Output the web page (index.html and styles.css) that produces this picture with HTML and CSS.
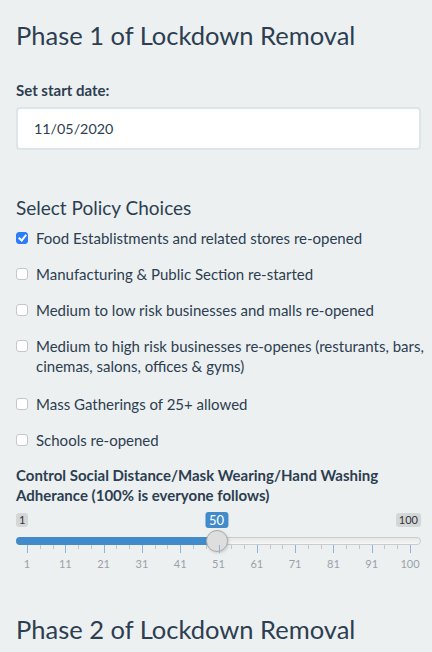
FILE: index.html
```html
<!DOCTYPE html>
<html>
<head>
<meta charset="utf-8">
<link rel="stylesheet" href="styles.css">
</head>
<body>
<div class="panel">
  <h3 class="phase">Phase 1 of Lockdown Removal</h3>

  <label class="ctl-label" for="start">Set start date:</label>
  <input id="start" class="date-input" type="text" value="11/05/2020">

  <h4 class="section">Select Policy Choices</h4>
  <div class="checks">
    <label class="check"><input type="checkbox" checked><span>Food Establistments and related stores re-opened</span></label>
    <label class="check"><input type="checkbox"><span>Manufacturing &amp; Public Section re-started</span></label>
    <label class="check"><input type="checkbox"><span>Medium to low risk businesses and malls re-opened</span></label>
    <label class="check check-multi"><input type="checkbox"><span>Medium to high risk businesses re-openes (resturants, bars, cinemas, salons, offices &amp; gyms)</span></label>
    <label class="check"><input type="checkbox"><span>Mass Gatherings of 25+ allowed</span></label>
    <label class="check"><input type="checkbox"><span>Schools re-opened</span></label>
  </div>

  <div class="ctl-label slider-label">Control Social Distance/Mask Wearing/Hand Washing Adherance (100% is everyone follows)</div>
  <div class="irs">
    <div class="irs-top">
      <span class="irs-min">1</span>
      <div class="irs-rail">
        <span class="irs-single" style="left:49.49%">50</span>
      </div>
      <span class="irs-max">100</span>
    </div>
    <div class="irs-line">
      <div class="irs-rail">
        <div class="irs-bar" style="width:calc(49.49% + 11px)"></div>
        <div class="irs-handle" style="left:49.49%"></div>
      </div>
    </div>
    <div class="irs-grid">
      <span class="pol big" style="left:0%"></span>
      <span class="pol" style="left:3.333%"></span>
      <span class="pol" style="left:6.667%"></span>
      <span class="pol big" style="left:10%"></span>
      <span class="pol" style="left:13.333%"></span>
      <span class="pol" style="left:16.667%"></span>
      <span class="pol big" style="left:20%"></span>
      <span class="pol" style="left:23.333%"></span>
      <span class="pol" style="left:26.667%"></span>
      <span class="pol big" style="left:30%"></span>
      <span class="pol" style="left:33.333%"></span>
      <span class="pol" style="left:36.667%"></span>
      <span class="pol big" style="left:40%"></span>
      <span class="pol" style="left:43.333%"></span>
      <span class="pol" style="left:46.667%"></span>
      <span class="pol big" style="left:50%"></span>
      <span class="pol" style="left:53.333%"></span>
      <span class="pol" style="left:56.667%"></span>
      <span class="pol big" style="left:60%"></span>
      <span class="pol" style="left:63.333%"></span>
      <span class="pol" style="left:66.667%"></span>
      <span class="pol big" style="left:70%"></span>
      <span class="pol" style="left:73.333%"></span>
      <span class="pol" style="left:76.667%"></span>
      <span class="pol big" style="left:80%"></span>
      <span class="pol" style="left:83.333%"></span>
      <span class="pol" style="left:86.667%"></span>
      <span class="pol big" style="left:90%"></span>
      <span class="pol" style="left:93.333%"></span>
      <span class="pol" style="left:96.667%"></span>
      <span class="pol big" style="left:100%"></span>
      <span class="gtxt" style="left:0%">1</span>
      <span class="gtxt" style="left:10%">11</span>
      <span class="gtxt" style="left:20%">21</span>
      <span class="gtxt" style="left:30%">31</span>
      <span class="gtxt" style="left:40%">41</span>
      <span class="gtxt" style="left:50%">51</span>
      <span class="gtxt" style="left:60%">61</span>
      <span class="gtxt" style="left:70%">71</span>
      <span class="gtxt" style="left:80%">81</span>
      <span class="gtxt" style="left:90%">91</span>
      <span class="gtxt" style="left:100%">100</span>
    </div>
  </div>

  <h3 class="phase phase-next">Phase 2 of Lockdown Removal</h3>
</div>
</body>
</html>
```

FILE: styles.css
```css
html, body {
  margin: 0;
  padding: 0;
  background: #ecf0f1;
}
body {
  font-family: Lato, "Helvetica Neue", Helvetica, Arial, sans-serif;
  font-size: 15px;
  line-height: 20px;
  color: #2c3e50;
}
.panel {
  display: flex;
  flex-direction: column;
  padding: 0 11px 0 16px;
}
.phase {
  font-size: 25.5px;
  line-height: 28px;
  font-weight: 400;
  margin: 20.5px 0 0;
}
.ctl-label {
  display: block;
  font-weight: 700;
  margin-top: 31.7px;
}
.date-input {
  margin-top: 6.8px;
  height: 43px;
  box-sizing: border-box;
  border: 2px solid #dce4ec;
  border-radius: 4px;
  background: #fff;
  padding: 0 16px;
  font-family: Lato, sans-serif;
  font-size: 14.3px;
  color: #2c3e50;
  outline: none;
}
.section {
  font-size: 19px;
  line-height: 20px;
  font-weight: 400;
  margin: 47.6px 0 0;
}
.checks {
  display: flex;
  flex-direction: column;
  gap: 16px;
  margin-top: 10.6px;
  margin-right: -6px;
}
.check {
  display: flex;
  align-items: flex-start;
  gap: 8px;
}
.check-multi {
  margin-bottom: 2px;
}
.check input {
  appearance: none;
  -webkit-appearance: none;
  margin: 4px 0 0;
  width: 12px;
  height: 12px;
  flex: none;
  box-sizing: border-box;
  border: 1px solid #c4c7ca;
  border-radius: 3px;
  background: #fff;
  position: relative;
}
.check input:checked {
  background: #2b7cf6;
  border-color: #2b7cf6;
}
.check input:checked::after {
  content: "";
  position: absolute;
  left: 3px;
  top: 0px;
  width: 3px;
  height: 6px;
  border: solid #fff;
  border-width: 0 2px 2px 0;
  transform: rotate(40deg);
}
.slider-label {
  margin-top: 15px;
}
.irs {
  margin-top: 8px;
  display: flex;
  flex-direction: column;
}
.irs-top {
  position: relative;
  display: flex;
  justify-content: space-between;
  height: 14px;
}
.irs-rail {
  position: absolute;
  left: 11px;
  right: 11px;
  top: 0;
  bottom: 0;
}
.irs-min, .irs-max {
  font-size: 11px;
  line-height: 14px;
  padding: 0 3px;
  color: #333;
  background: rgba(0, 0, 0, 0.1);
  border-radius: 3px;
}
.irs-single {
  position: absolute;
  top: -1px;
  transform: translateX(-50%);
  font-size: 13px;
  line-height: 16px;
  padding: 0 4px;
  color: #fff;
  background: #428bca;
  border-radius: 3px;
}
.irs-line {
  position: relative;
  margin-top: 10px;
  height: 8px;
  box-sizing: border-box;
  border: 1px solid #cccccc;
  border-radius: 8px;
  background: linear-gradient(to bottom, #dedede -50%, #fff 150%);
}
.irs-bar {
  position: absolute;
  left: -12px;
  top: -1px;
  height: 8px;
  background: #428bca;
  border-radius: 8px 0 0 8px;
}
.irs-handle {
  position: absolute;
  top: -8px;
  width: 22px;
  height: 22px;
  box-sizing: border-box;
  transform: translateX(-50%);
  border: 1px solid #ababab;
  border-radius: 50%;
  background: #dedede;
  box-shadow: 1px 1px 3px rgba(0, 0, 0, 0.15);
}
.irs-grid {
  position: relative;
  margin: 0 11px;
  height: 26px;
}
.pol {
  position: absolute;
  top: 0;
  width: 1px;
  height: 4px;
  background: #c3c7cb;
}
.pol.big {
  height: 8px;
  background: #8db5dc;
}
.gtxt {
  position: absolute;
  top: 12px;
  transform: translateX(-50%);
  font-size: 11px;
  line-height: 14px;
  color: #9aa1a8;
}
.phase-next {
  margin-top: 43.4px;
}
```
